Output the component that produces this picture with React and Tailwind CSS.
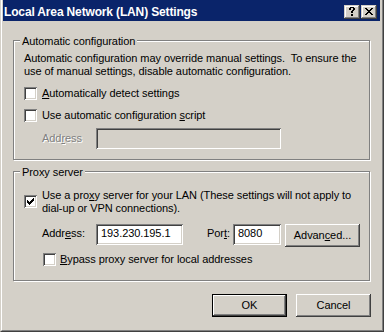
import React from 'react';

const CHECK = [
  '......#',
  '.....##',
  '#...###',
  '##.###.',
  '#####..',
  '.###...',
  '..#....',
];

const CLOSE = [
  '##....##',
  '.##..##.',
  '..####..',
  '...##...',
  '..####..',
  '.##..##.',
  '##....##',
];

const HELP = [
  '.####.',
  '##..##',
  '##..##',
  '...##.',
  '..##..',
  '..##..',
  '......',
  '..##..',
  '..##..',
];

const raised =
  'shadow-[inset_-1px_-1px_0_#404040,inset_1px_1px_0_#ffffff,inset_-2px_-2px_0_#808080,inset_2px_2px_0_#d4d0c8]';
const sunken =
  'shadow-[inset_1px_1px_0_#808080,inset_-1px_-1px_0_#ffffff,inset_2px_2px_0_#404040,inset_-2px_-2px_0_#d4d0c8]';

function Pixels({ rows, className }) {
  const w = rows[0].length;
  const h = rows.length;
  const rects = [];
  rows.forEach((row, y) => {
    [...row].forEach((c, x) => {
      if (c === '#') rects.push(<rect key={`${x}-${y}`} x={x} y={y} width="1" height="1" />);
    });
  });
  return (
    <svg width={w} height={h} viewBox={`0 0 ${w} ${h}`} shapeRendering="crispEdges" fill="currentColor" className={className}>
      {rects}
    </svg>
  );
}

function CaptionButton({ glyph, className }) {
  return (
    <div className="w-[16px] h-[14px] bg-[#d4d0c8] text-black shadow-[inset_-1px_-1px_0_#404040,inset_1px_1px_0_#d4d0c8,inset_-2px_-2px_0_#808080,inset_2px_2px_0_#ffffff]">
      <Pixels rows={glyph} className={className} />
    </div>
  );
}

function Checkbox({ checked, className = '' }) {
  return (
    <div className={`w-[13px] h-[13px] shrink-0 bg-white ${sunken} ${className}`}>
      {checked && <Pixels rows={CHECK} className="block mt-[3px] ml-[3px]" />}
    </div>
  );
}

function GroupLabel({ children }) {
  return (
    <span className="absolute left-[6px] top-[-6px] px-[2px] bg-[#d4d0c8] whitespace-nowrap">{children}</span>
  );
}

export default function App() {
  return (
    <div className="w-[384px] h-[332px] bg-[#d4d0c8] text-black text-[11px] leading-[13px] tracking-[-0.07px] font-['Liberation_Sans',Arial,sans-serif] border-l border-r border-b border-[#404040] border-l-[#d4d0c8]">
      <div className="h-full flex flex-col border-l border-r border-b border-[#808080] border-l-white pl-px pr-[2px]">
        {/* caption */}
        <div className="h-[21px] shrink-0 bg-[#0a246a] flex items-start text-white">
          <span className="pt-[5px] pl-px whitespace-nowrap font-bold text-[12px] leading-[14px] tracking-[-0.15px]">
            Local Area Network (LAN) Settings
          </span>
          <div className="ml-auto mt-[5px] mr-[3px] flex gap-px">
            <CaptionButton glyph={HELP} className="block mt-[2px] ml-[5px]" />
            <CaptionButton glyph={CLOSE} className="block mt-[3px] ml-[4px]" />
          </div>
        </div>

        {/* automatic configuration */}
        <div className="relative shrink-0 mt-[19px] ml-[10px] w-[357px] h-[120px] border border-[#808080] shadow-[1px_1px_0_#ffffff,inset_1px_1px_0_#ffffff] pl-[10px] pt-[11px]">
          <GroupLabel>Automatic configuration</GroupLabel>
          <p className="whitespace-pre">
            {'Automatic configuration may override manual settings.  To ensure the\nuse of manual settings, disable automatic configuration.'}
          </p>
          <div className="mt-[9px] flex items-start gap-[5px]">
            <Checkbox />
            <span>
              <u>A</u>utomatically detect settings
            </span>
          </div>
          <div className="mt-[9px] flex items-start gap-[5px]">
            <Checkbox />
            <span>
              Use automatic configuration <u>s</u>cript
            </span>
          </div>
          <div className="mt-[6px] flex items-center">
            <span className="w-[72px] pl-[18px] text-[#808080] [text-shadow:1px_1px_0_#ffffff]">
              Add<u>r</u>ess
            </span>
            <div className={`w-[185px] h-[21px] bg-[#d4d0c8] ${sunken}`} />
          </div>
        </div>

        {/* proxy server */}
        <div className="relative shrink-0 mt-[11px] ml-[10px] w-[357px] h-[110px] border border-[#808080] shadow-[1px_1px_0_#ffffff,inset_1px_1px_0_#ffffff] pl-[10px] pt-[17px]">
          <GroupLabel>Proxy server</GroupLabel>
          <div className="flex items-start gap-[5px]">
            <Checkbox checked className="mt-[6px]" />
            <p className="whitespace-pre">
              Use a pro<u>x</u>y server for your LAN (These settings will not apply to{'\n'}dial-up or VPN connections).
            </p>
          </div>
          <div className="mt-[9px] flex items-start">
            <span className="w-[72px] pl-[18px] mt-[3px]">
              Addr<u>e</u>ss:
            </span>
            <div className={`w-[87px] h-[21px] bg-white pl-[5px] pt-[3px] ${sunken}`}>193.230.195.1</div>
            <span className="ml-[24px] w-[26px] mt-[3px]">
              Por<u>t</u>:
            </span>
            <div className={`w-[48px] h-[21px] bg-white pl-[5px] pt-[3px] ${sunken}`}>8080</div>
            <button className={`ml-[4px] w-[75px] h-[23px] bg-[#d4d0c8] flex items-center justify-center ${raised}`}>
              Advan<u>c</u>ed...
            </button>
          </div>
          <div className="mt-[6px] ml-[19px] flex items-start gap-[4px]">
            <Checkbox />
            <span>
              <u>B</u>ypass proxy server for local addresses
            </span>
          </div>
        </div>

        {/* buttons */}
        <div className="mt-[13px] flex justify-end gap-[9px] pr-[9px]">
          <button className={`w-[75px] h-[23px] bg-[#d4d0c8] border border-black flex items-center justify-center ${raised}`}>
            OK
          </button>
          <button className={`w-[75px] h-[23px] bg-[#d4d0c8] flex items-center justify-center ${raised}`}>
            Cancel
          </button>
        </div>
      </div>
    </div>
  );
}
